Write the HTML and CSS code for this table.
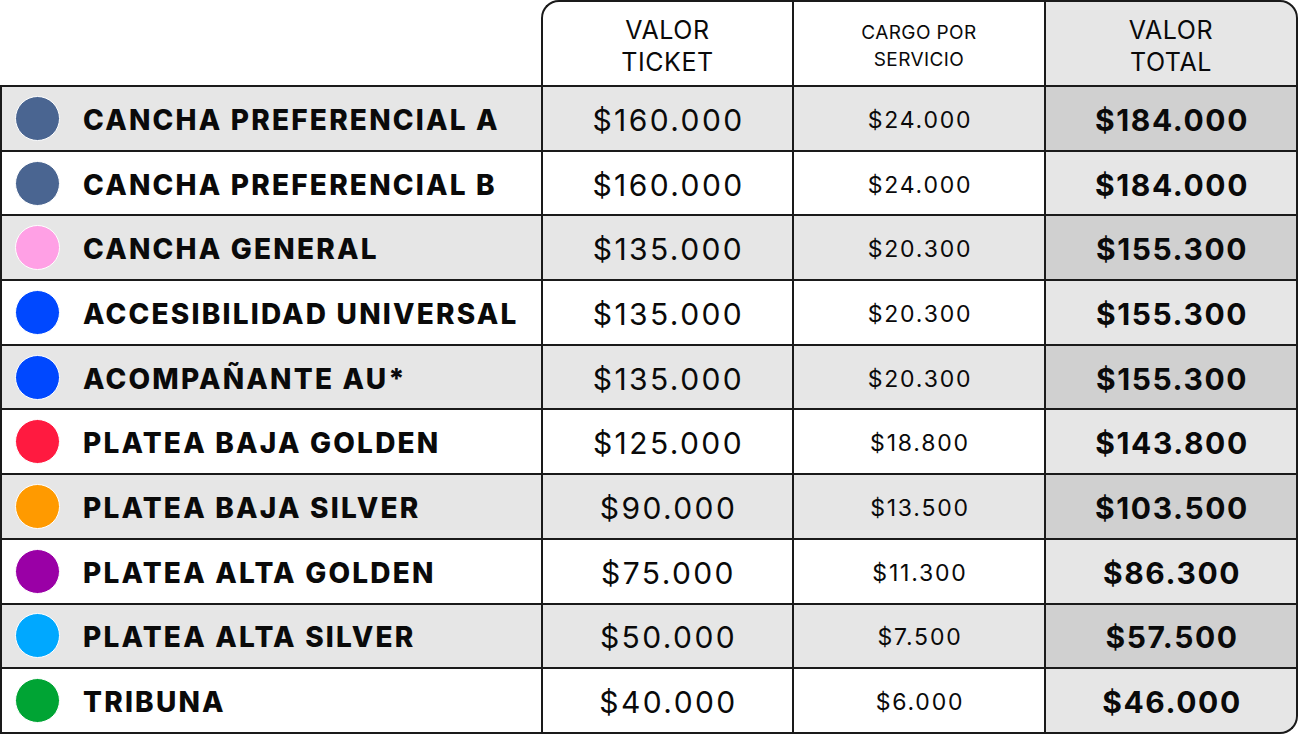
FILE: index.html
```html
<!DOCTYPE html>
<html lang="es">
<head>
<meta charset="utf-8">
<title>Precios</title>
<link rel="stylesheet" href="styles.css">
</head>
<body>
<div class="grid">
  <div class="h h-empty"></div>
  <div class="h h-ticket">VALOR<br>TICKET</div>
  <div class="h h-cargo">CARGO POR<br>SERVICIO</div>
  <div class="h h-total">VALOR<br>TOTAL</div>

  <div class="c name odd"><span class="dot d-slate"></span>CANCHA PREFERENCIAL A</div>
  <div class="c price odd">$160.000</div>
  <div class="c fee odd">$24.000</div>
  <div class="c total odd">$184.000</div>

  <div class="c name"><span class="dot d-slate"></span>CANCHA PREFERENCIAL B</div>
  <div class="c price">$160.000</div>
  <div class="c fee">$24.000</div>
  <div class="c total">$184.000</div>

  <div class="c name odd"><span class="dot d-pink"></span>CANCHA GENERAL</div>
  <div class="c price odd">$135.000</div>
  <div class="c fee odd">$20.300</div>
  <div class="c total odd">$155.300</div>

  <div class="c name"><span class="dot d-blue"></span>ACCESIBILIDAD UNIVERSAL</div>
  <div class="c price">$135.000</div>
  <div class="c fee">$20.300</div>
  <div class="c total">$155.300</div>

  <div class="c name odd"><span class="dot d-blue"></span>ACOMPAÑANTE AU*</div>
  <div class="c price odd">$135.000</div>
  <div class="c fee odd">$20.300</div>
  <div class="c total odd">$155.300</div>

  <div class="c name"><span class="dot d-red"></span>PLATEA BAJA GOLDEN</div>
  <div class="c price">$125.000</div>
  <div class="c fee">$18.800</div>
  <div class="c total">$143.800</div>

  <div class="c name odd"><span class="dot d-orange"></span>PLATEA BAJA SILVER</div>
  <div class="c price odd">$90.000</div>
  <div class="c fee odd">$13.500</div>
  <div class="c total odd">$103.500</div>

  <div class="c name"><span class="dot d-purple"></span>PLATEA ALTA GOLDEN</div>
  <div class="c price">$75.000</div>
  <div class="c fee">$11.300</div>
  <div class="c total">$86.300</div>

  <div class="c name odd"><span class="dot d-sky"></span>PLATEA ALTA SILVER</div>
  <div class="c price odd">$50.000</div>
  <div class="c fee odd">$7.500</div>
  <div class="c total odd">$57.500</div>

  <div class="c name"><span class="dot d-green"></span>TRIBUNA</div>
  <div class="c price">$40.000</div>
  <div class="c fee">$6.000</div>
  <div class="c total last">$46.000</div>
</div>
</body>
</html>
```

FILE: styles.css
```css
* { box-sizing: border-box; }
html, body { margin: 0; padding: 0; background: #fff; }
body {
  width: 1300px;
  height: 744px;
  overflow: hidden;
  font-family: "Inter", "Lato", sans-serif;
  color: #0a0a0a;
}
.grid {
  display: grid;
  grid-template-columns: 541px 251px 252px 254px;
  grid-template-rows: 87px repeat(10, 64.7px);
  width: 1298px;
}
.h {
  display: flex;
  align-items: center;
  justify-content: center;
  text-align: center;
  border-top: 2px solid #1a1a1a;
  border-left: 2px solid #1a1a1a;
  border-bottom: 2px solid #1a1a1a;
  font-size: 25px;
  line-height: 32px;
  letter-spacing: 0.6px;
  padding-top: 4px;
}
.h-empty { border-top: 0; border-left: 0; }
.h-ticket { border-top-left-radius: 18px; }
.h-cargo { font-size: 19px; line-height: 27px; letter-spacing: 0.4px; }
.h-total {
  background: #e6e6e6;
  border-right: 2px solid #1a1a1a;
  border-top-right-radius: 18px;
}
.c {
  display: flex;
  align-items: center;
  justify-content: center;
  border-left: 2px solid #1a1a1a;
  border-bottom: 2px solid #1a1a1a;
  background: #fff;
  padding-top: 3px;
}
.c.odd { background: #e6e6e6; }
.name {
  justify-content: flex-start;
  padding-left: 13px;
  gap: 23px;
  font-weight: 800;
  font-size: 28px;
  letter-spacing: 2.2px;
}
.name .dot { margin-top: -3px; }
.price { font-size: 30px; letter-spacing: 2.4px; padding-left: 2px; }
.fee { font-size: 23px; letter-spacing: 1.8px; padding-left: 2px; }
.total {
  font-size: 30px;
  font-weight: 700;
  letter-spacing: 1.6px;
  padding-left: 2px;
  background: #e6e6e6;
  border-right: 2px solid #1a1a1a;
}
.c.total.odd { background: #d0d0d0; }
.total.last { border-bottom-right-radius: 18px; }
.dot {
  flex: none;
  width: 45px;
  height: 45px;
  border-radius: 50%;
  border: 1.5px solid #fff;
}
.d-slate { background: #4a6591; }
.d-pink { background: #ffa0e5; }
.d-blue { background: #0048ff; }
.d-red { background: #ff1a40; }
.d-orange { background: #ff9a00; }
.d-purple { background: #9a00a6; }
.d-sky { background: #00a8ff; }
.d-green { background: #00a434; }
```
